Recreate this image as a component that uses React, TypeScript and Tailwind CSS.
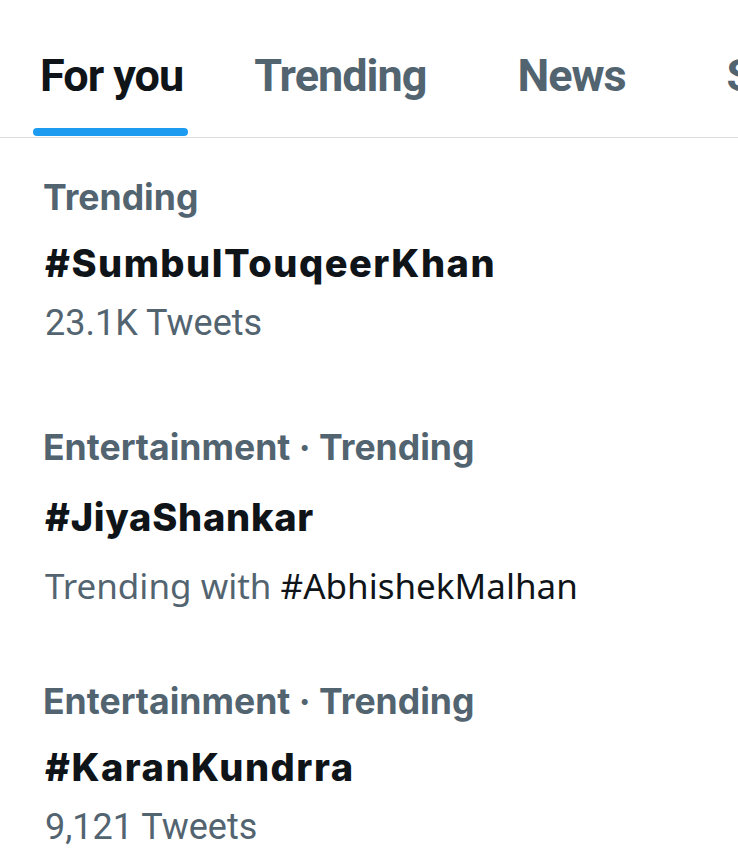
import React from "react";

const tabs = [
  { label: "For you", cls: "ml-0 text-[#0f1419]" },
  { label: "Trending", cls: "ml-[71px] text-[#536471]" },
  { label: "News", cls: "ml-[91px] text-[#536471]" },
  { label: "Sports", cls: "ml-[101px] text-[#536471]" },
];

function Trend({
  category,
  title,
  children,
  className,
  titleGap,
  titleTracking,
}: {
  category: string;
  title: string;
  children: React.ReactNode;
  className?: string;
  titleGap?: string;
  titleTracking?: string;
}) {
  return (
    <div className={"flex flex-col pl-[45px] whitespace-nowrap " + (className ?? "")}>
      <div className="ml-[-2px] text-[35.6px] leading-[44px] font-bold text-[#536471] [font-family:Inter,sans-serif]">
        {category}
      </div>
      <div
        className={
          (titleGap ?? "mt-[20px]") +
          " " +
          (titleTracking ?? "tracking-[1.5px]") +
          " text-[38px] leading-[46px] font-extrabold text-[#0f1419] [font-family:Inter,sans-serif]"
        }
      >
        {title}
      </div>
      {children}
    </div>
  );
}

export default function App() {
  return (
    <div className="w-[738px] h-[868px] overflow-hidden bg-white">
      <div className="h-[138px] border-b border-[#d9dde0] overflow-hidden">
        <div className="flex items-start pl-[40px] whitespace-nowrap [font-family:Roboto,sans-serif] font-bold text-[45px] leading-[52px] tracking-[-1px]">
          {tabs.map((t, i) => (
            <div key={t.label} className={"relative shrink-0 h-[137px] pt-[50px] " + t.cls}>
              {t.label}
              {i === 0 && (
                <div className="absolute left-[-7px] right-[-5px] bottom-[1px] h-[8px] rounded-full bg-[#1d9bf0]" />
              )}
            </div>
          ))}
        </div>
      </div>

      <Trend category="Trending" title="#SumbulTouqeerKhan" className="pt-[38px]">
        <div className="mt-[15px] text-[36px] leading-[44px] text-[#536471] [font-family:Roboto,sans-serif]">
          23.1K Tweets
        </div>
      </Trend>

      <Trend
        category="Entertainment · Trending"
        title="#JiyaShankar"
        className="pt-[81px]"
        titleGap="mt-[24px]"
        titleTracking="tracking-[0.75px]"
      >
        <div className="mt-[24px] text-[35px] leading-[44px] text-[#536471] [font-family:'Noto_Sans',sans-serif]">
          Trending with <span className="text-[#0f1419]">#AbhishekMalhan</span>
        </div>
      </Trend>

      <Trend category="Entertainment · Trending" title="#KaranKundrra" className="pt-[72px]">
        <div className="mt-[15px] text-[36px] leading-[44px] text-[#536471] [font-family:Roboto,sans-serif]">
          9,121 Tweets
        </div>
      </Trend>
    </div>
  );
}
